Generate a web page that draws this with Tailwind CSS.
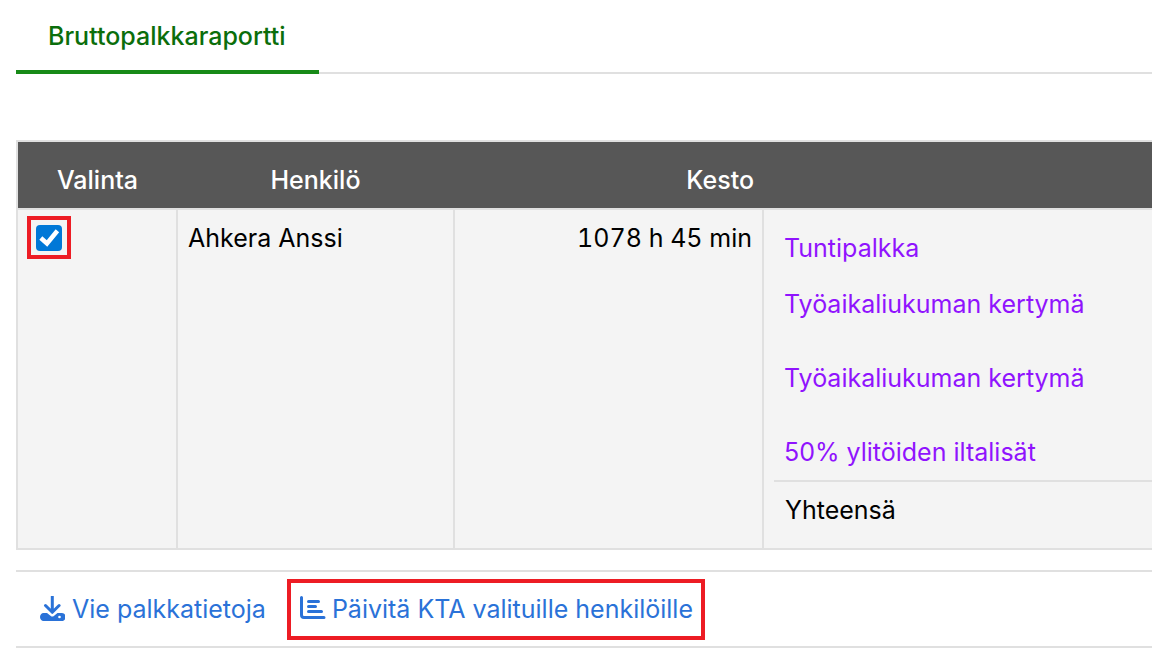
<!DOCTYPE html>
<html lang="fi">
<head>
  <meta charset="UTF-8">
  <meta name="viewport" content="width=device-width, initial-scale=1.0">
  <title>Bruttopalkkaraportti</title>
  <script src="https://cdn.jsdelivr.net/npm/@tailwindcss/browser@4"></script>
</head>
<body class="bg-white font-['Inter',sans-serif] text-[25px] text-black overflow-hidden h-[656px]">
  <div class="pl-4">
    <!-- Tabs -->
    <div class="border-b-2 border-[#e0e0e0] h-[74px] w-[1136px]">
      <div class="w-[303px] h-[74px] border-b-4 border-[#178a17] pl-[32px] pt-[20px] text-[#0b6e0b] font-medium leading-[32px]">Bruttopalkkaraportti</div>
    </div>

    <!-- Table -->
    <div class="mt-[66px] w-[1136px] border-2 border-r-0 border-[#e0e0e0] bg-[#f4f4f4]">
      <div class="flex h-[66px] bg-[#575757] text-white font-medium leading-[30px] pt-[23px]">
        <div class="w-[159px] text-center">Valinta</div>
        <div class="w-[277px] text-center">Henkilö</div>
        <div class="w-[310px] text-right pr-[10px]">Kesto</div>
      </div>
      <div class="flex h-[340px] border-t-2 border-[#e0e0e0]">
        <div class="w-[160px] border-r-2 border-[#e0e0e0] pl-[9px] pt-[6px]">
          <div class="w-[44px] h-[43px] border-4 border-[#ed1c24] flex items-center justify-center">
            <span class="w-[26px] h-[26px] rounded-[4px] bg-[#0078d7] flex items-center justify-center">
              <svg class="w-[26px] h-[26px]" viewBox="0 0 26 26" fill="none" stroke="#fff" stroke-width="4.500" stroke-linecap="square">
                <path d="M6.500 14.500l4.500 4 9-11"/>
              </svg>
            </span>
          </div>
        </div>
        <div class="w-[277px] border-r-2 border-[#e0e0e0] pl-[10px] pt-[13px] leading-[30px]">Ahkera Anssi</div>
        <div class="w-[309px] border-r-2 border-[#e0e0e0] pr-[10px] pt-[13px] leading-[30px] text-right tabular-nums">1078 h 45 min</div>
        <div class="flex-1 pl-[10px] flex flex-col">
          <div class="h-[272px] border-b-2 border-[#e0e0e0] text-[#9013fe] pl-[11px] pt-[23px] leading-[30px]">
            <div class="-ml-[1px]">Tuntipalkka</div>
            <div class="mt-[26px] -ml-[1px]">Työaikaliukuman kertymä</div>
            <div class="mt-[44px] -ml-[1px]">Työaikaliukuman kertymä</div>
            <div class="mt-[44px] -ml-[1px]">50% ylitöiden iltalisät</div>
          </div>
          <div class="pl-[11px] pt-[13px] leading-[30px]">Yhteensä</div>
        </div>
      </div>
    </div>

    <!-- Toolbar -->
    <div class="mt-[20px] w-[1136px] h-[78px] border-y-2 border-[#e0e0e0] flex items-center pl-[23px] text-[#2a72d8] leading-[30px]">
      <a class="flex items-center gap-[7px]">
        <svg class="w-[26px] h-[26px]" viewBox="0 0 26 26" fill="currentColor">
          <path d="M13.300 0.500v15M6.500 9.500l6.800 6.800 6.800-6.800" fill="none" stroke="currentColor" stroke-width="3" stroke-linecap="round" stroke-linejoin="round"/>
          <path d="M4.500 17h3.500l3.800 3c.9.700 2.100.7 3 0l3.700-3h4.500c2 0 3.500 1.700 3.500 4s-1.500 4-3.500 4h-18.500c-2 0-3.500-1.700-3.500-4s1.500-4 3.500-4z"/>
          <circle cx="20.500" cy="21" r="1.300" fill="#fff"/>
        </svg>
        <span>Vie palkkatietoja</span>
      </a>
      <a class="ml-[21px] mt-[1px] w-[418px] h-[61px] border-4 border-[#ed1c24] flex items-center pl-[9px] gap-[6px]">
        <svg class="w-[26px] h-[26px] mb-[1px]" viewBox="0 0 26 26" fill="none" stroke="currentColor" stroke-width="3" stroke-linecap="round">
          <path d="M1.500 1.500v17.500c0 1.700.8 2.500 2.500 2.500h20"/>
          <path d="M8.500 5.500h10M8.500 10.500h7M8.500 15.500h13"/>
        </svg>
        <span class="mb-[2px]">Päivitä KTA valituille henkilöille</span>
      </a>
    </div>
  </div>
</body>
</html>
